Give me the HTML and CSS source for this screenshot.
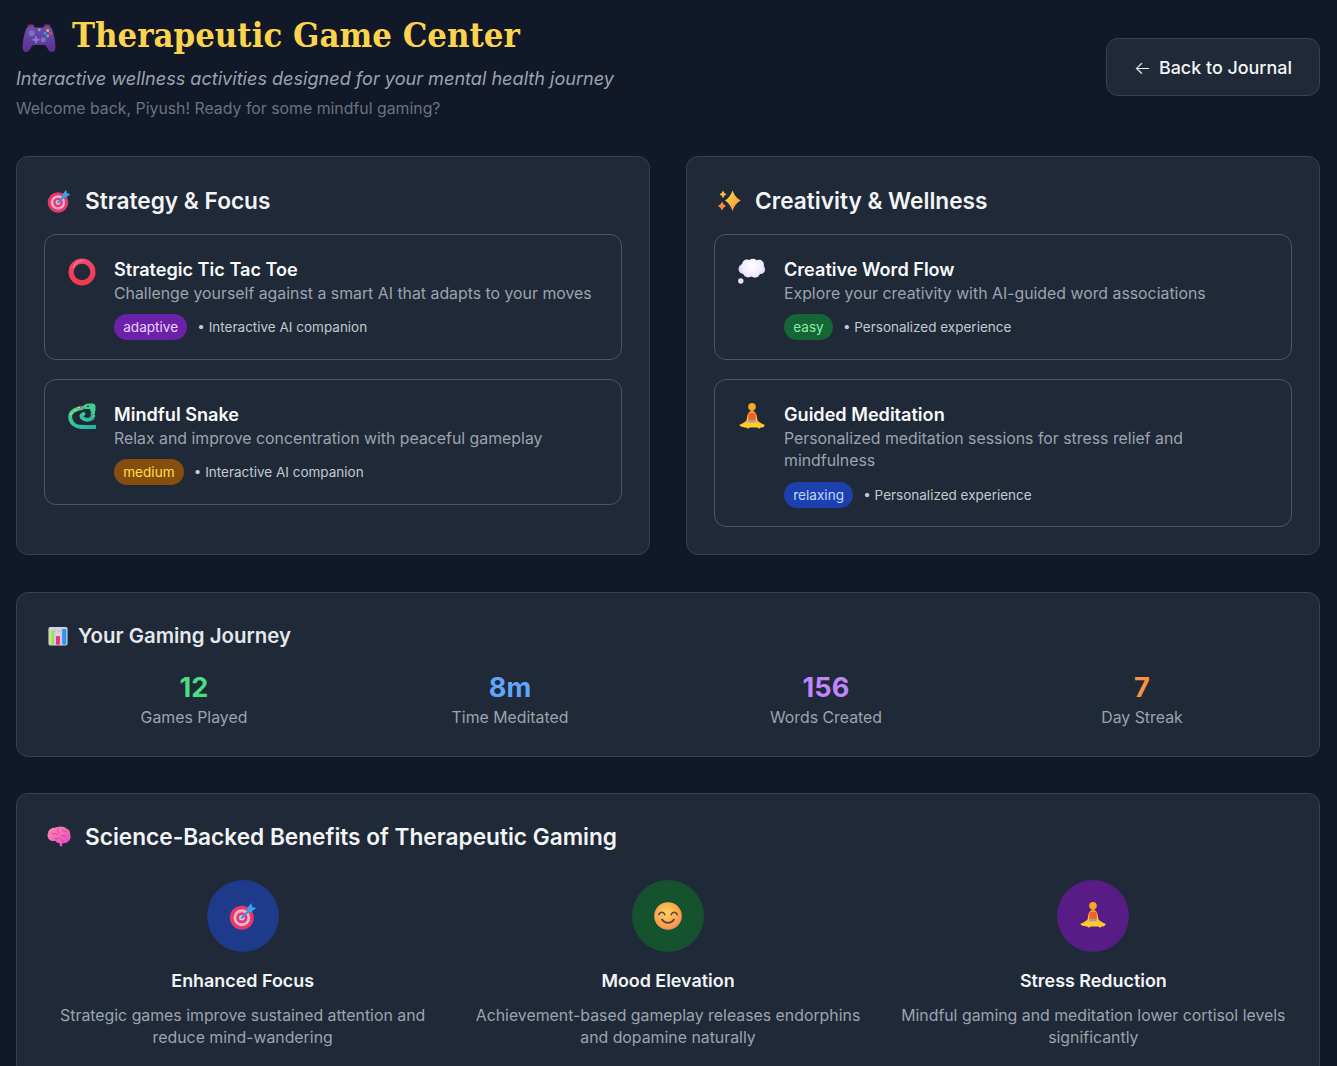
FILE: index.html
```html
<!DOCTYPE html>
<html lang="en">
<head>
<meta charset="utf-8">
<title>Therapeutic Game Center</title>
<link rel="stylesheet" href="styles.css">
</head>
<body>
<svg class="defs" aria-hidden="true">
  <defs>
    <linearGradient id="gPad" x1="0" y1="0" x2="0" y2="1"><stop offset="0" stop-color="#6a50ac"/><stop offset="1" stop-color="#5c2f90"/></linearGradient>
    <linearGradient id="gSnake" gradientUnits="userSpaceOnUse" x1="2" y1="3" x2="26" y2="26"><stop offset="0" stop-color="#4fd08a"/><stop offset="1" stop-color="#1fb5a5"/></linearGradient>
    <radialGradient id="gCloud" gradientUnits="userSpaceOnUse" cx="14" cy="8" r="16"><stop offset="0" stop-color="#ffffff"/><stop offset=".6" stop-color="#f1ecfb"/><stop offset="1" stop-color="#cfc2ea"/></radialGradient>
    <linearGradient id="gSpark" x1="0" y1="0" x2="1" y2="1"><stop offset="0" stop-color="#ffd84f"/><stop offset="1" stop-color="#f9912f"/></linearGradient>
    <linearGradient id="gBrain" x1="0" y1="0" x2="1" y2="1"><stop offset="0" stop-color="#f98fa8"/><stop offset="1" stop-color="#e845c8"/></linearGradient>
    <radialGradient id="gFace" cx=".45" cy=".4" r=".65"><stop offset="0" stop-color="#ffd45a"/><stop offset=".75" stop-color="#fb9f45"/><stop offset="1" stop-color="#ef7f7f"/></radialGradient>
    <linearGradient id="gRing" x1="0" y1="0" x2="0" y2="1"><stop offset="0" stop-color="#f0476c"/><stop offset="1" stop-color="#f4384a"/></linearGradient>

    <symbol id="i-pad" viewBox="0 0 34 30">
      <ellipse cx="9" cy="2.800" rx="3.500" ry="1.500" fill="#8a2a55"/><ellipse cx="25" cy="2.800" rx="3.500" ry="1.500" fill="#8a2a55"/>
      <path d="M9 3c2 0 3 .9 4 1.400h8c1-.5 2-1.400 4-1.400 3.500 0 5 2.300 6 6 1.200 4.500 2.500 10.500 2.500 15 0 3.500-1.500 5-3.500 5-2.500 0-3.700-2-5-4.500-.9-1.700-1.700-2.500-3.500-2.500H12.500c-1.800 0-2.600.8-3.500 2.500C7.700 27 6.500 29 4 29c-2 0-3.500-1.500-3.500-5 0-4.500 1.300-10.500 2.500-15 1-3.700 2.500-6 6-6z" fill="url(#gPad)"/>
      <circle cx="9.700" cy="10.300" r="3" fill="#7b6fc8"/>
      <path d="M14 14v5.400M11.300 16.700h5.400" stroke="#8478e0" stroke-width="1.900" stroke-linecap="round"/>
      <circle cx="21.300" cy="16.700" r="2.500" fill="#7b6fc8"/>
      <circle cx="17.300" cy="6.900" r="1.400" fill="#a79bb8"/>
      <circle cx="25.700" cy="7.400" r="1.500" fill="#f5b030"/><circle cx="28.400" cy="10.200" r="1.500" fill="#ef3f5e"/><circle cx="23" cy="10.200" r="1.500" fill="#4a8fe8"/><circle cx="25.700" cy="13" r="1.500" fill="#3fcb80"/>
    </symbol>

    <symbol id="i-target" viewBox="0 0 24 24">
      <circle cx="11" cy="13.500" r="10.300" fill="#e8386b"/>
      <circle cx="11" cy="13.500" r="7.200" fill="#e8b4cc"/>
      <circle cx="11" cy="13.500" r="4.800" fill="#e8386b"/>
      <circle cx="11" cy="13.500" r="2.400" fill="#d9c6d8"/>
      <path d="M11 13.500L18 6.500" stroke="#3c8fdc" stroke-width="1.800" stroke-linecap="round"/>
      <path d="M15.500 5.500L19 .8l1 3.400 3.400 1-4.700 3.500-3.200-.2z" fill="#35a5ee"/>
    </symbol>

    <symbol id="i-spark" viewBox="0 0 24 24">
      <path d="M15.500 1.500Q18 8.500 23.800 11.500 18 14.500 15.500 22 13 14.500 8 11.500 13 8.500 15.500 1.500z" fill="url(#gSpark)"/>
      <path d="M6 1.500Q7 4.500 9.500 5.300 7 6.200 6 9.200 5 6.200 2.500 5.300 5 4.500 6 1.500z" fill="#ffb638"/>
      <path d="M5 12.500Q6.100 16 9 17 6.100 18 5 21.500 3.900 18 1 17 3.900 16 5 12.500z" fill="#f88a3a"/>
    </symbol>

    <symbol id="i-ring" viewBox="0 0 28 28">
      <circle cx="14" cy="14" r="10.900" fill="none" stroke="url(#gRing)" stroke-width="5.200"/>
      <path d="M5.500 9.500A9.800 9.800 0 0 1 14 2.600" fill="none" stroke="#f77f96" stroke-width="1.200" stroke-linecap="round"/>
    </symbol>

    <symbol id="i-snake" viewBox="0 0 28 28">
      <path d="M14 5C7 6 2.200 9 2.200 14 2.200 20.500 8 23.800 13 24H27.500" fill="none" stroke="url(#gSnake)" stroke-width="3.800" stroke-linecap="round"/>
      <path d="M24.800 6V12.500C24.800 16.500 19.500 17.500 16 16 13 14.600 12.500 12.500 15.500 11" fill="none" stroke="url(#gSnake)" stroke-width="4" stroke-linecap="round"/>
      <path d="M14.500 4C15.500 1.800 18 .6 21 .6h3.500c1.800 0 3 1.200 3 3V8h-5.200V6h-4.300c-1.500 0-3-.5-3.500-2z" fill="#3fcf92"/>
      <path d="M14.800 3.500l-3-.9.400 2.300z" fill="#e8386b"/>
      <circle cx="20" cy="3.300" r=".9" fill="#1b3a34"/>
      <path d="M26 8.500v8" stroke="#c6e85a" stroke-width="1.100" stroke-dasharray="1.500 2.200"/>
      <path d="M3 11.500l1.300-1.800M6.800 7.800l1.800-1M10 4.800l1.500-.4" stroke="#c6e85a" stroke-width="1.100" stroke-linecap="round"/>
    </symbol>

    <symbol id="i-cloud" viewBox="0 0 28 28">
      <g fill="url(#gCloud)">
        <circle cx="9" cy="6.500" r="5"/><circle cx="15" cy="5.800" r="5"/><circle cx="21" cy="6.800" r="5"/>
        <circle cx="5.500" cy="11" r="5"/><circle cx="22.500" cy="11.500" r="4.600"/>
        <circle cx="10" cy="14.500" r="5"/><circle cx="17" cy="14.800" r="5"/><circle cx="14" cy="10.500" r="8"/>
      </g>
      <circle cx="2.800" cy="23" r="2.700" fill="#e8e0f8"/>
    </symbol>

    <symbol id="i-med" viewBox="0 0 28 28">
      <path d="M14 8c-2.500 0-4 1.800-4.500 4l-1 5.500c-1.800 1.800-4 3-6.500 4.300.3 1 1 1.600 2.500 1.700h19c1.500-.1 2.200-.7 2.500-1.700-2.500-1.300-4.700-2.500-6.500-4.300l-1-5.500C18 9.800 16.500 8 14 8z" fill="#ffc02e"/>
      <rect x="10.300" y="9.500" width="7.400" height="9" rx="2" fill="#f0602c"/>
      <rect x="10.300" y="16.800" width="7.400" height="2.600" rx=".8" fill="#a7a09a"/>
      <path d="M1.500 21.500C5.500 22.500 10 19.500 14 19.500s8.500 3 12.500 2c.3 1.800-1 2.900-3 2.900-1 0-1.500.6-2 .9-1 .5-1.500-.2-2-.9H11.500c-.5.7-1 1.400-2 .9-.5-.3-1-.9-2-.9-2 0-6.300-1.100-6-2.900z" fill="#ffcb2e"/>
      <circle cx="14" cy="3.800" r="3.800" fill="#f9a825"/>
      <rect x="12.500" y="6.500" width="3" height="2.500" fill="#ef9a1f"/>
    </symbol>

    <symbol id="i-chart" viewBox="0 0 22 22">
      <rect x=".5" y="1" width="21" height="20.500" rx="2" fill="#d8d5e2"/>
      <path d="M.5 5.500h21M7.500 1v20.500M14.500 1v20.500" stroke="#b9b5c6" stroke-width=".6"/>
      <rect x="2" y="5" width="4.500" height="15.500" rx="1" fill="#9adf4f"/>
      <rect x="2" y="5" width="2" height="15.500" rx="1" fill="#c0e870"/>
      <rect x="8.800" y="11" width="4.300" height="9.500" rx="1" fill="#ea2f88"/>
      <rect x="15.600" y="3" width="4.600" height="17.500" rx="1" fill="#2f97e8"/>
    </symbol>

    <symbol id="i-brain" viewBox="0 0 24 24">
      <path d="M10.500 2c3-1.200 7-.6 9.300 1.800 2.500 1 3.700 3.400 3.400 6 1 2.500.2 5.400-2.300 6.600-.8 1.200-2.400 1.900-3.900 1.600-.7.500-1.400.5-2 .6l.3 2.300c-.6.700-1.600.7-2.200.1-.3-1-.5-2-.6-3.100-1.700.2-3.100-.7-4-2-2.800.6-5.500-.1-7-2.200-1.300-1.700-1.300-4-.4-5.700C1.300 5 4.500 2.500 7.500 2.900c.9-.5 2-.9 3-.9z" fill="url(#gBrain)"/>
      <path d="M5 9c2-1 4-.7 5.500.7M11 3.500c-.8 1.700-.5 3 .5 4.300M15.500 5.500c1 1 2.500 1.200 4 .8M14 11c2-1 4-.5 5.500 1M8 13.500c1.500.7 3 .5 4-.5M13.500 14.500c.5 1 1.500 1.500 3 1.500" fill="none" stroke="#d9359c" stroke-width=".9" stroke-linecap="round"/>
    </symbol>

    <symbol id="i-smile" viewBox="0 0 28 28">
      <circle cx="14" cy="14" r="13.800" fill="url(#gFace)"/>
      <path d="M4.800 12.500c1.200-3 4.800-3 6 0M17.200 12.500c1.200-3 4.800-3 6 0" fill="none" stroke="#5b4257" stroke-width="1.700" stroke-linecap="round"/>
      <path d="M8 17.500c2.800 4.500 9.200 4.500 12 0" fill="none" stroke="#5b4257" stroke-width="1.800" stroke-linecap="round"/>
    </symbol>
  </defs>
</svg>

<main class="page">
  <header class="top">
    <div>
      <div class="brand">
        <svg class="pad-icon"><use href="#i-pad"/></svg>
        <h1 class="title">Therapeutic Game Center</h1>
      </div>
      <p class="tagline">Interactive wellness activities designed for your mental health journey</p>
      <p class="welcome">Welcome back, Piyush! Ready for some mindful gaming?</p>
    </div>
    <button class="back" type="button"><span class="arrow">←</span> Back to Journal</button>
  </header>

  <section class="columns">
    <div class="panel">
      <h2 class="heading"><svg class="head-icon"><use href="#i-target"/></svg>Strategy &amp; Focus</h2>
      <div class="games">
        <article class="game">
          <svg class="game-icon"><use href="#i-ring"/></svg>
          <div class="game-body">
            <h3 class="game-title">Strategic Tic Tac Toe</h3>
            <p class="game-desc">Challenge yourself against a smart AI that adapts to your moves</p>
            <div class="meta"><span class="badge purple">adaptive</span><span class="note">• Interactive AI companion</span></div>
          </div>
        </article>
        <article class="game">
          <svg class="game-icon"><use href="#i-snake"/></svg>
          <div class="game-body">
            <h3 class="game-title">Mindful Snake</h3>
            <p class="game-desc">Relax and improve concentration with peaceful gameplay</p>
            <div class="meta"><span class="badge amber">medium</span><span class="note">• Interactive AI companion</span></div>
          </div>
        </article>
      </div>
    </div>
    <div class="panel">
      <h2 class="heading"><svg class="head-icon"><use href="#i-spark"/></svg>Creativity &amp; Wellness</h2>
      <div class="games">
        <article class="game">
          <svg class="game-icon"><use href="#i-cloud"/></svg>
          <div class="game-body">
            <h3 class="game-title">Creative Word Flow</h3>
            <p class="game-desc">Explore your creativity with AI-guided word associations</p>
            <div class="meta"><span class="badge green">easy</span><span class="note">• Personalized experience</span></div>
          </div>
        </article>
        <article class="game">
          <svg class="game-icon"><use href="#i-med"/></svg>
          <div class="game-body">
            <h3 class="game-title">Guided Meditation</h3>
            <p class="game-desc">Personalized meditation sessions for stress relief and mindfulness</p>
            <div class="meta"><span class="badge blue">relaxing</span><span class="note">• Personalized experience</span></div>
          </div>
        </article>
      </div>
    </div>
  </section>

  <section class="panel journey">
    <h2 class="heading small"><svg class="chart-icon"><use href="#i-chart"/></svg>Your Gaming Journey</h2>
    <div class="stats">
      <div class="stat"><div class="num c-green">12</div><div class="label">Games Played</div></div>
      <div class="stat"><div class="num c-blue">8m</div><div class="label">Time Meditated</div></div>
      <div class="stat"><div class="num c-purple">156</div><div class="label">Words Created</div></div>
      <div class="stat"><div class="num c-orange">7</div><div class="label">Day Streak</div></div>
    </div>
  </section>

  <section class="panel science">
    <h2 class="heading roomy"><svg class="head-icon"><use href="#i-brain"/></svg>Science-Backed Benefits of Therapeutic Gaming</h2>
    <div class="benefits">
      <div class="benefit">
        <div class="disc d-blue"><svg class="disc-icon"><use href="#i-target"/></svg></div>
        <h3 class="ben-title">Enhanced Focus</h3>
        <p class="ben-desc">Strategic games improve sustained attention and reduce mind-wandering</p>
      </div>
      <div class="benefit">
        <div class="disc d-green"><svg class="disc-icon"><use href="#i-smile"/></svg></div>
        <h3 class="ben-title">Mood Elevation</h3>
        <p class="ben-desc">Achievement-based gameplay releases endorphins and dopamine naturally</p>
      </div>
      <div class="benefit">
        <div class="disc d-purple"><svg class="disc-icon"><use href="#i-med"/></svg></div>
        <h3 class="ben-title">Stress Reduction</h3>
        <p class="ben-desc">Mindful gaming and meditation lower cortisol levels significantly</p>
      </div>
    </div>
  </section>
</main>
</body>
</html>
```

FILE: styles.css
```css
* { box-sizing: border-box; }
html, body { margin: 0; height: 1066px; overflow: hidden; }
body { background: #111827; color: #f3f4f6; font-family: Inter, "Liberation Sans", sans-serif; }
.defs { position: absolute; width: 0; height: 0; }
p, h1, h2, h3 { margin: 0; }

.page { padding: 16px 17px 0 16px; display: flex; flex-direction: column; }

.top { display: flex; justify-content: space-between; align-items: flex-start; margin-bottom: 35px; }
.brand { display: flex; align-items: center; gap: 16px; height: 38px; }
.pad-icon { width: 34px; height: 30px; margin-left: 6px; margin-top: 6px; }
.title { font-family: "DejaVu Serif Condensed", "DejaVu Serif", serif; font-stretch: condensed; font-weight: 700; font-size: 34.4px; line-height: 38px; color: #fcd34d; }
.tagline { margin-top: 10px; font-size: 18.1px; line-height: 28px; font-style: italic; color: #9ca3af; }
.welcome { margin-top: 5px; font-size: 15.85px; line-height: 24px; color: #6b7280; }
.back { width: 214px; height: 58px; margin-top: 22px; padding: 1px 0 0; background: #1f2937; border: 1px solid #374151; border-radius: 12px; color: #f3f4f6; font: 500 17.9px/28px Inter, sans-serif; }
.arrow { margin-right: 3px; font-weight: 300; }

.panel { background: #1f2937; border: 1px solid #374151; border-radius: 12px; padding: 27px; }
.columns { display: grid; grid-template-columns: 634px 634px; gap: 36px; margin-bottom: 37px; }
.heading { display: flex; align-items: center; font-size: 22.65px; font-weight: 600; line-height: 34px; color: #f3f4f6; margin-bottom: 16px; }
.heading.roomy { margin-top: -1px; margin-bottom: 26px; }
.head-icon { width: 24px; height: 24px; margin: 0 14px 0 3px; flex: none; }

.games { display: flex; flex-direction: column; gap: 19.2px; }
.game { display: flex; gap: 18px; padding: 22.7px 23px 18.3px; border: 1px solid #4b5563; border-radius: 12px; }
.game-icon { width: 28px; height: 28px; flex: none; }
.game-title { font-size: 18.1px; font-weight: 600; line-height: 22px; color: #f9fafb; }
.game-desc { margin-top: 3px; font-size: 15.85px; line-height: 22.4px; color: #9ca3af; }
.meta { display: flex; align-items: center; gap: 10px; margin-top: 9.4px; }
.badge { padding: 0 9.2px; height: 26px; border-radius: 13px; font-size: 13.6px; line-height: 26px; }
.note { font-size: 13.5px; line-height: 20px; color: #c4c9d1; }
.purple { background: #6b21a8; color: #e9d5ff; }
.amber { background: #854d0e; color: #fde047; }
.green { background: #166534; color: #86efac; }
.blue { background: #1e40af; color: #bfdbfe; }

.journey { margin-bottom: 36px; height: 165px; }
.heading.small { font-size: 20.4px; color: #e5e7eb; margin-top: -1px; margin-bottom: 17px; }
.chart-icon { width: 20px; height: 20px; margin: 0 10px 0 4px; flex: none; }
.stats { display: grid; grid-template-columns: repeat(4, 1fr); gap: 16px; }
.stat { text-align: center; }
.num { font-size: 27.2px; font-weight: 700; line-height: 36px; }
.label { font-size: 15.85px; line-height: 24px; color: #9ca3af; }
.c-green { color: #4ade80; }
.c-blue { color: #60a5fa; }
.c-purple { color: #c084fc; }
.c-orange { color: #fb923c; }

.benefits { display: grid; grid-template-columns: repeat(3, 1fr); gap: 28px; }
.benefit { text-align: center; display: flex; flex-direction: column; align-items: center; }
.disc { width: 72px; height: 72px; border-radius: 50%; display: flex; align-items: center; justify-content: center; }
.disc-icon { width: 28px; height: 28px; }
.d-blue { background: #1e3a8a; }
.d-green { background: #14532d; }
.d-purple { background: #581c87; }
.ben-title { margin-top: 18px; font-size: 17.9px; font-weight: 600; line-height: 22px; color: #f3f4f6; }
.ben-desc { margin-top: 13px; font-size: 15.85px; line-height: 22px; color: #9ca3af; }
```
